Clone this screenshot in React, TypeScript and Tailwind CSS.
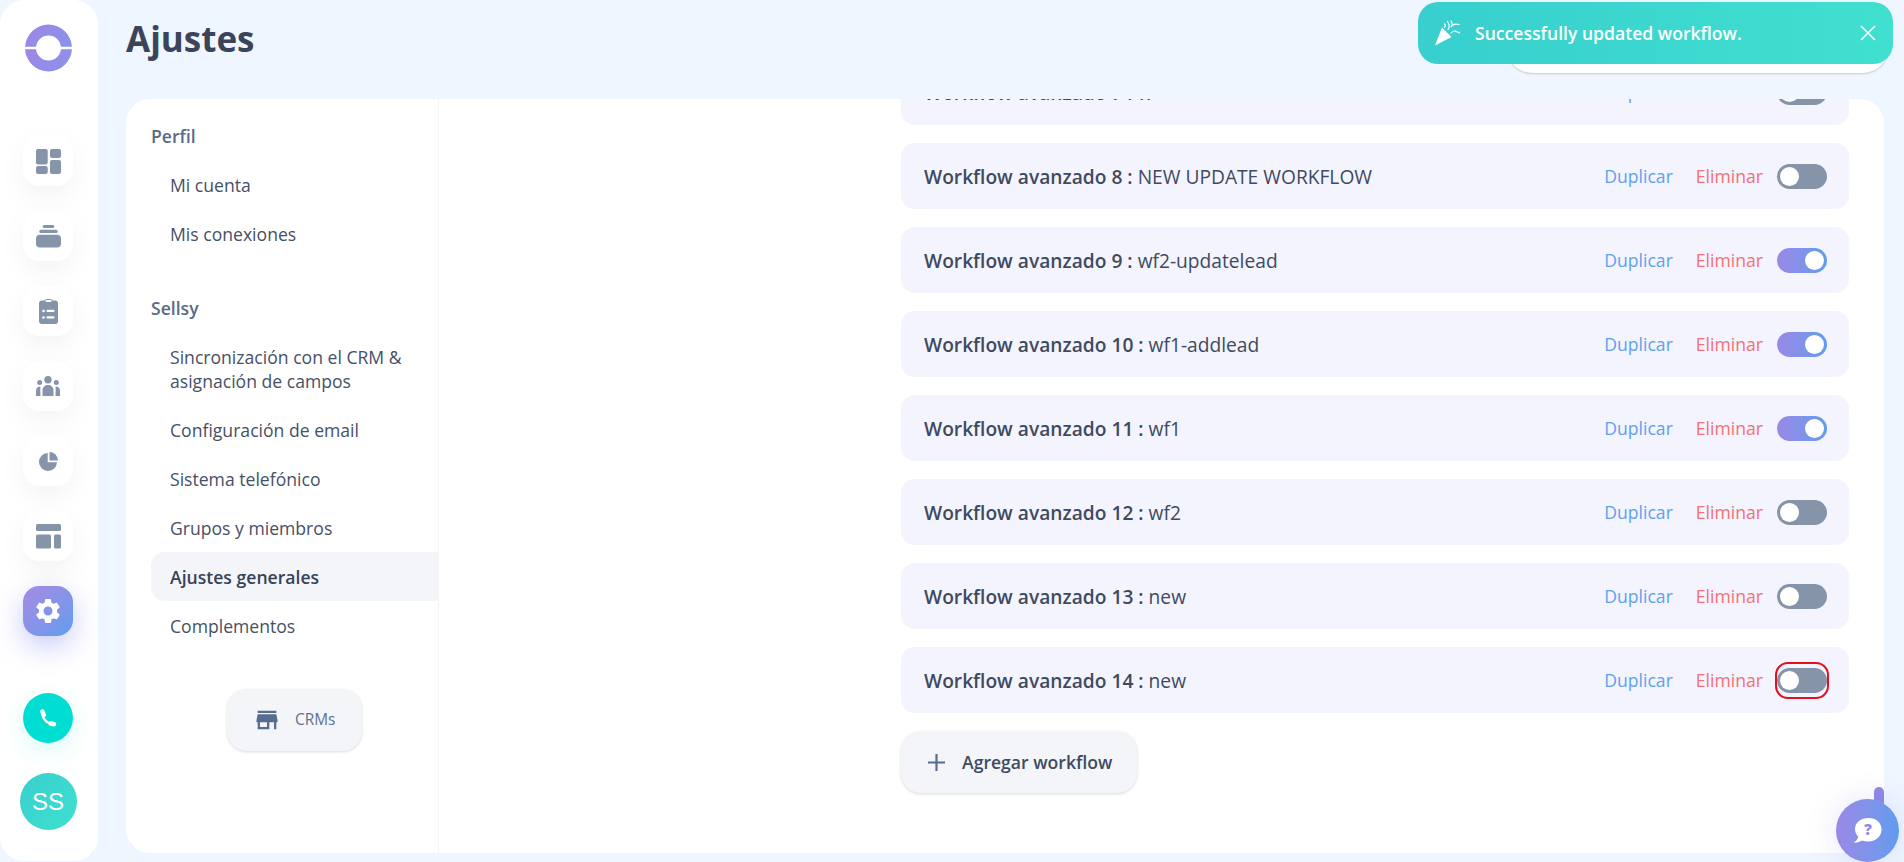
import React from "react";
import { MdSettings, MdStore } from "react-icons/md";

const rows: { n: number; name: string; on: boolean; ring?: boolean }[] = [
  { n: 7, name: "w", on: false },
  { n: 8, name: "NEW UPDATE WORKFLOW", on: false },
  { n: 9, name: "wf2-updatelead", on: true },
  { n: 10, name: "wf1-addlead", on: true },
  { n: 11, name: "wf1", on: true },
  { n: 12, name: "wf2", on: false },
  { n: 13, name: "new", on: false },
  { n: 14, name: "new", on: false, ring: true },
];

function Toggle({ on, ring }: { on: boolean; ring?: boolean }) {
  return (
    <div className={`w-[54px] h-[37px] rounded-[13px] border-2 flex items-center justify-center ${ring ? "border-[#e3101e]" : "border-transparent"}`}>
      <div className={`w-[50px] h-[25px] shrink-0 rounded-full flex items-center px-[3px] ${on ? "justify-end bg-gradient-to-r from-[#9a88e6] to-[#5f9cee]" : "justify-start bg-[#8594a9]"}`}>
        <div className="w-[19px] h-[19px] rounded-full bg-white" />
      </div>
    </div>
  );
}

function Row({ n, name, on, ring }: { n: number; name: string; on: boolean; ring?: boolean }) {
  return (
    <div className="h-[66px] shrink-0 rounded-[14px] bg-[#f3f4fe] flex items-center pl-[23px] pr-[20px] text-[#3f4a5f]">
      <div className="flex-1 text-[19.2px] leading-[28px] pt-[1px]">
        <span className="font-semibold">Workflow avanzado {n} : </span>
        <span>{name}</span>
      </div>
      <span className="text-[#5f9fee] text-[17.6px]">Duplicar</span>
      <span className="text-[#f56f76] text-[17.6px] ml-[23px]">Eliminar</span>
      <div className="ml-[12px]">
        <Toggle on={on} ring={ring} />
      </div>
    </div>
  );
}

function NavBtn({ children, active }: { children: React.ReactNode; active?: boolean }) {
  return (
    <div
      className={`w-[50px] h-[50px] rounded-[16px] flex items-center justify-center ${
        active
          ? "bg-gradient-to-br from-[#a58ae4] to-[#5f9cee] text-white shadow-[0_10px_28px_rgba(110,120,235,0.38)]"
          : "bg-white text-[#8594a9] shadow-[0_10px_28px_rgba(0,0,0,0.05)]"
      }`}
    >
      {children}
    </div>
  );
}

function MenuItem({ children, active }: { children: React.ReactNode; active?: boolean }) {
  return (
    <div className={`py-[12.5px] pl-[19px] pr-[20px] rounded-l-[14px] ${active ? "bg-[#f3f5f8] font-semibold text-[#374258]" : "text-[#465066]"}`}>
      {children}
    </div>
  );
}

export default function App() {
  return (
    <div className="w-[1904px] h-[862px] overflow-hidden relative bg-[#eff6ff] flex font-['Open_Sans',sans-serif] text-[17.6px] leading-[24px]">
      {/* Sidebar */}
      <aside className="w-[98px] h-[861px] shrink-0 bg-white rounded-[24px] flex flex-col items-center pt-[24px] pr-[2px]">
        <svg width="47" height="48" viewBox="0 0 47 48" className="shrink-0">
          <defs>
            <linearGradient id="lg" x1="0" y1="0" x2="1" y2="0.7">
              <stop offset="0" stopColor="#a085e6" />
              <stop offset="1" stopColor="#8a92ea" />
            </linearGradient>
          </defs>
          <path d="M0.04 22.7A23.5 23.5 0 0 1 46.96 22.7H35.93A12.5 12.5 0 0 0 11.07 22.7Z" fill="url(#lg)" />
          <path d="M0.04 25.3A23.5 23.5 0 0 0 46.96 25.3H35.93A12.5 12.5 0 0 1 11.07 25.3Z" fill="url(#lg)" />
        </svg>
        <div className="mt-[64px] flex flex-col gap-[25px]">
          <NavBtn>
            <svg width="25" height="25" viewBox="0 0 25 25" fill="currentColor">
              <rect x="0" y="0" width="11.700" height="15.500" rx="2" />
              <rect x="14" y="0" width="11" height="9" rx="2" />
              <rect x="0" y="17" width="11.700" height="8" rx="2" />
              <rect x="14" y="11" width="11" height="14" rx="2" />
            </svg>
          </NavBtn>
          <NavBtn>
            <svg width="25" height="23" viewBox="0 0 25 23" fill="currentColor">
              <rect x="6.700" y="0" width="11.600" height="3" rx="1.500" />
              <rect x="3.300" y="4.700" width="18.400" height="3.300" rx="1.600" />
              <rect x="0" y="9.700" width="25" height="12.800" rx="4" />
            </svg>
          </NavBtn>
          <NavBtn>
            <svg width="19" height="25" viewBox="0 0 19 25" fill="currentColor">
              <path d="M3 1.500H5.500C6 .5 7 0 9.500 0S13 .5 13.500 1.500H16A3 3 0 0 1 19 4.500V22A3 3 0 0 1 16 25H3A3 3 0 0 1 0 22V4.500A3 3 0 0 1 3 1.500Z" />
              <rect x="6.500" y="1" width="6" height="2" rx="1" fill="white" />
              <circle cx="4.500" cy="12" r="1.300" fill="white" />
              <circle cx="4.500" cy="18.500" r="1.300" fill="white" />
              <rect x="7.500" y="10.800" width="8" height="2.300" rx="1.100" fill="white" />
              <rect x="7.500" y="17.300" width="8" height="2.300" rx="1.100" fill="white" />
            </svg>
          </NavBtn>
          <NavBtn>
            <svg width="24" height="20" viewBox="0 0 24 20" fill="currentColor">
              <circle cx="12" cy="3.700" r="3.700" />
              <circle cx="3.700" cy="6.500" r="2.500" />
              <circle cx="20.300" cy="6.500" r="2.500" />
              <path d="M6.500 20V14.500C6.500 11 9 9 12 9S17.500 11 17.500 14.500V20Z" />
              <path d="M0 20V15C0 12 1.500 10.500 4.500 10.500C4 12 4.500 16 4.500 20Z" />
              <path d="M24 20V15C24 12 22.500 10.500 19.500 10.500C20 12 19.500 16 19.500 20Z" />
            </svg>
          </NavBtn>
          <NavBtn>
            <svg width="19" height="19" viewBox="0 0 19 19" fill="currentColor">
              <path d="M8.700 1A9 9 0 1 0 18 10.300H8.700Z" />
              <path d="M10.500 0A8.500 8.500 0 0 1 19 8.500H10.500Z" />
            </svg>
          </NavBtn>
          <NavBtn>
            <svg width="25" height="25" viewBox="0 0 25 25" fill="currentColor">
              <rect x="0" y="0" width="25" height="7" rx="1.500" />
              <rect x="0" y="10.500" width="15" height="14" rx="1.500" />
              <rect x="18" y="10.500" width="7" height="14" rx="1.500" />
            </svg>
          </NavBtn>
          <NavBtn active><MdSettings size={30} /></NavBtn>
        </div>
        <div className="mt-[57px] w-[50px] h-[50px] shrink-0 rounded-full bg-[#00ddd2] flex items-center justify-center shadow-[0_8px_24px_rgba(0,221,210,0.15)]">
          <svg width="18" height="18" viewBox="0 0 18 18" fill="none" stroke="white" strokeLinecap="round">
            <path d="M3.500 2.500C2.500 9 8 15 15 15.500" strokeWidth="2.400" />
            <path d="M3.400 2.500L4.800 6" strokeWidth="4.500" />
            <path d="M11.500 14.500L15 15.300" strokeWidth="4.500" />
          </svg>
        </div>
        <div className="mt-[30px] w-[57px] h-[57px] shrink-0 rounded-full bg-gradient-to-br from-[#38cfce] to-[#40e0d0] text-white flex items-center justify-center text-[24px] font-['Liberation_Sans',sans-serif]">
          SS
        </div>
      </aside>

      {/* Main */}
      <main className="flex-1 min-w-0 pl-[28px] pr-[20px] flex flex-col">
        <header className="h-[99px] shrink-0 pt-[16px]">
          <h1 className="text-[35px] leading-[46px] font-bold text-[#3b4559]">Ajustes</h1>
        </header>
        <section className="w-[1758px] h-[754px] bg-white rounded-[24px] overflow-hidden flex">
          <nav className="w-[313px] shrink-0 border-r border-[#f3f4f6] pl-[25px] pt-[25px] flex flex-col">
            <div className="font-semibold text-[#5a6b85]">Perfil</div>
            <div className="mt-[12px]">
              <MenuItem>Mi cuenta</MenuItem>
              <MenuItem>Mis conexiones</MenuItem>
            </div>
            <div className="mt-[38px] font-semibold text-[#5a6b85]">Sellsy</div>
            <div className="mt-[12px]">
              <MenuItem>Sincronización con el CRM &amp; asignación de campos</MenuItem>
              <MenuItem>Configuración de email</MenuItem>
              <MenuItem>Sistema telefónico</MenuItem>
              <MenuItem>Grupos y miembros</MenuItem>
              <MenuItem active>Ajustes generales</MenuItem>
              <MenuItem>Complementos</MenuItem>
            </div>
            <div className="mt-[39px] ml-[76px] w-[135px] h-[62px] rounded-[20px] bg-[#f3f5f8] shadow-[0_1px_3px_rgba(0,0,0,0.15)] flex items-center pl-[26px] text-[#5f7290] text-[15.400px]">
              <MdStore size={28} className="text-[#566d90]" />
              <span className="ml-[14px]">CRMs</span>
            </div>
          </nav>
          <div className="flex-1 min-w-0 pl-[462px] pr-[35px] -mt-[40px] flex flex-col gap-[18px]">
            {rows.map((r) => (
              <Row key={r.n} {...r} />
            ))}
            <div className="w-[236px] h-[62px] shrink-0 rounded-[20px] bg-[#f3f5f8] shadow-[0_1px_3px_rgba(0,0,0,0.15)] flex items-center pl-[27px] font-semibold text-[#3f4a5f]">
              <svg width="17" height="17" viewBox="0 0 17 17" stroke="#566d90" strokeWidth="2.200" className="shrink-0">
                <path d="M8.500 0V17M0 8.500H17" />
              </svg>
              <span className="ml-[17px]">Agregar workflow</span>
            </div>
          </div>
        </section>
      </main>

      {/* Pill under toast */}
      <div className="absolute left-[1506px] top-[20px] w-[383px] h-[53px] rounded-[28px] bg-white shadow-[0_1px_2px_rgba(0,0,0,0.18)]" />

      {/* Toast */}
      <div className="absolute left-[1418px] top-[2px] w-[475px] h-[62px] rounded-[20px] bg-gradient-to-r from-[#38cfce] to-[#40e0d0] flex items-center text-white pl-[17px] pr-[17px]">
        <svg width="26" height="26" viewBox="0 0 26 26" fill="white" className="shrink-0">
          <path d="M0 25.500L7 7.500L16.500 17Z" />
          <path d="M9.500 7C10.500 6 10.500 5 9.500 4M13 9.500C15 7 15 5 12.500 1.500M16 1C17.500 3 17.500 5 16 7L18 5C20 3.500 22 4 24 4.500M16 13C18 10.500 21 10.500 24.500 13" fill="none" stroke="white" strokeWidth="1.200" strokeLinecap="round" />
        </svg>
        <span className="ml-[14px] font-semibold flex-1">Successfully updated workflow.</span>
        <svg width="16" height="16" viewBox="0 0 16 16" stroke="white" strokeWidth="1.500" className="shrink-0">
          <path d="M1 1L15 15M15 1L1 15" />
        </svg>
      </div>

      {/* Help bubble */}
      <div className="absolute left-[1874px] top-[787px] w-[10px] h-[30px] rounded-t-[5px] bg-[#9088e4]" />
      <div className="absolute left-[1836px] top-[799px] w-[63px] h-[63px] rounded-full bg-gradient-to-r from-[#9a88e6] to-[#5f9cee] flex items-center justify-center shadow-[0_0_30px_rgba(120,120,235,0.2)]">
        <svg width="29" height="25" viewBox="0 0 29 25" fill="white">
          <path d="M15.500 0C8 0 2 4.500 2 11c0 3 1.200 5.500 3.200 7.500C5 20.500 3.500 23 .5 24.500c3.500.3 6.500-.5 8.500-2 2 .6 4.200 1 6.500 .9 7.500 0 13-5.300 13-12S23 0 15.500 0Z" />
          <text x="15" y="17" textAnchor="middle" fontSize="15" fontWeight="800" fill="#8f89e6" fontFamily="Open Sans, sans-serif">?</text>
        </svg>
      </div>
    </div>
  );
}
